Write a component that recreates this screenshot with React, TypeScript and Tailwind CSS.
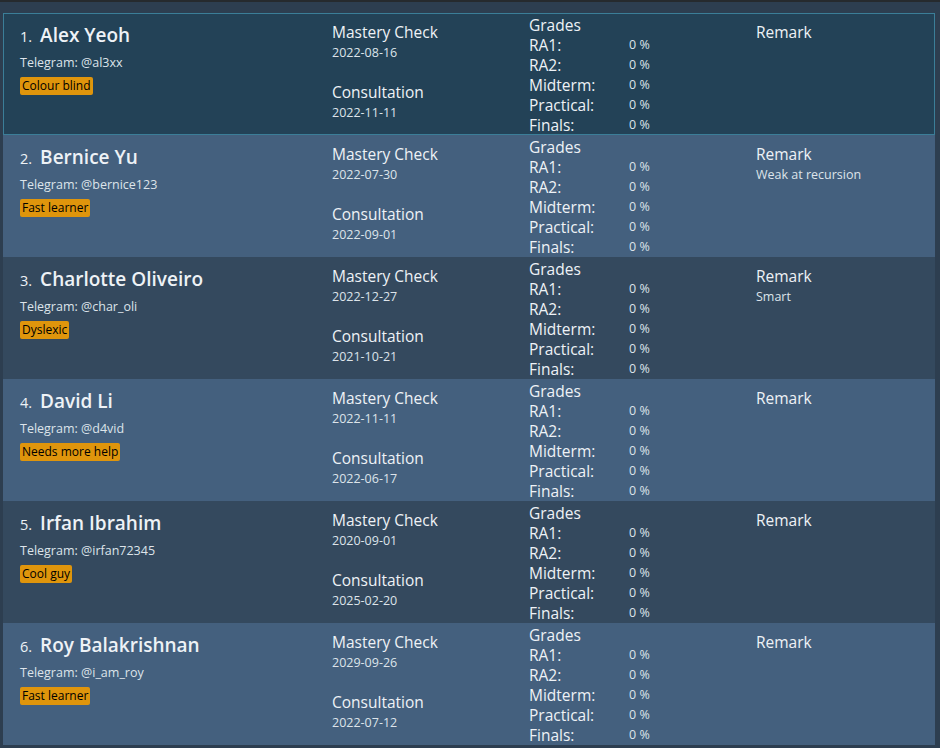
const STUDENTS = [
  { name: "Alex Yeoh", tg: "@al3xx", tag: "Colour blind", mastery: "2022-08-16", consult: "2022-11-11", remark: "" },
  { name: "Bernice Yu", tg: "@bernice123", tag: "Fast learner", mastery: "2022-07-30", consult: "2022-09-01", remark: "Weak at recursion" },
  { name: "Charlotte Oliveiro", tg: "@char_oli", tag: "Dyslexic", mastery: "2022-12-27", consult: "2021-10-21", remark: "Smart" },
  { name: "David Li", tg: "@d4vid", tag: "Needs more help", mastery: "2022-11-11", consult: "2022-06-17", remark: "" },
  { name: "Irfan Ibrahim", tg: "@irfan72345", tag: "Cool guy", mastery: "2020-09-01", consult: "2025-02-20", remark: "" },
  { name: "Roy Balakrishnan", tg: "@i_am_roy", tag: "Fast learner", mastery: "2029-09-26", consult: "2022-07-12", remark: "" },
];

const GRADES = ["RA1:", "RA2:", "Midterm:", "Practical:", "Finals:"];

function StudentCard({ s, index }: { s: (typeof STUDENTS)[number]; index: number }) {
  const selected = index === 0;
  const bg = selected
    ? "bg-[#234257] border border-[#3b7e98]"
    : index % 2 === 1
      ? "bg-[#44607e] border border-transparent"
      : "bg-[#34495e] border border-transparent";

  return (
    <div className={`flex h-[122px] ${bg}`}>
      {/* name + telegram + tag */}
      <div className="w-[328px] shrink-0 pl-[16px] pt-[8px]">
        <div className="flex items-baseline text-[#eef2f6]">
          <span className="text-[14.5px]">{index + 1}.</span>
          <span className="ml-[8px] text-[19px] font-semibold leading-[26px]">{s.name}</span>
        </div>
        <p className="mt-[5px] text-[12.5px] leading-[20px] text-[#dde4ea]">Telegram: {s.tg}</p>
        <div className="mt-[4px] flex">
          <span className="rounded-[2px] bg-[#df950c] px-[2px] text-[12px] leading-[18px] text-black">
            {s.tag}
          </span>
        </div>
      </div>

      {/* mastery check + consultation */}
      <div className="w-[197px] shrink-0 pt-[7px] text-[#eef2f6]">
        <p className="text-[15.5px] leading-[22px]">Mastery Check</p>
        <p className="text-[12.5px] leading-[20px] text-[#dde4ea]">{s.mastery}</p>
        <p className="mt-[18px] text-[15.5px] leading-[22px]">Consultation</p>
        <p className="text-[12.5px] leading-[20px] text-[#dde4ea]">{s.consult}</p>
      </div>

      {/* grades */}
      <div className="w-[227px] shrink-0 pt-[1px] text-[#eef2f6]">
        <p className="text-[15.5px] leading-[20px]">Grades</p>
        {GRADES.map((g) => (
          <div key={g} className="flex h-[20px] items-center">
            <span className="w-[100px] text-[15.5px] leading-[20px]">{g}</span>
            <span className="text-[12.5px] leading-[20px] text-[#dde4ea]">0 %</span>
          </div>
        ))}
      </div>

      {/* remark */}
      <div className="flex-1 pt-[7px] text-[#eef2f6]">
        <p className="text-[15.5px] leading-[22px]">Remark</p>
        <p className="text-[12.5px] leading-[20px] text-[#dde4ea]">{s.remark}</p>
      </div>
    </div>
  );
}

export default function App() {
  return (
    <div
      className="h-[748px] w-[940px] overflow-hidden bg-[#2d3e50]"
      style={{ fontFamily: '"Segoe UI", "Open Sans", "Noto Sans", sans-serif' }}
    >
      <div className="h-[2px] bg-[#262a2e]" />
      <div className="flex flex-col pl-[3px] pr-[5px] pt-[11px]">
        {STUDENTS.map((s, i) => (
          <StudentCard key={s.name} s={s} index={i} />
        ))}
      </div>
    </div>
  );
}
